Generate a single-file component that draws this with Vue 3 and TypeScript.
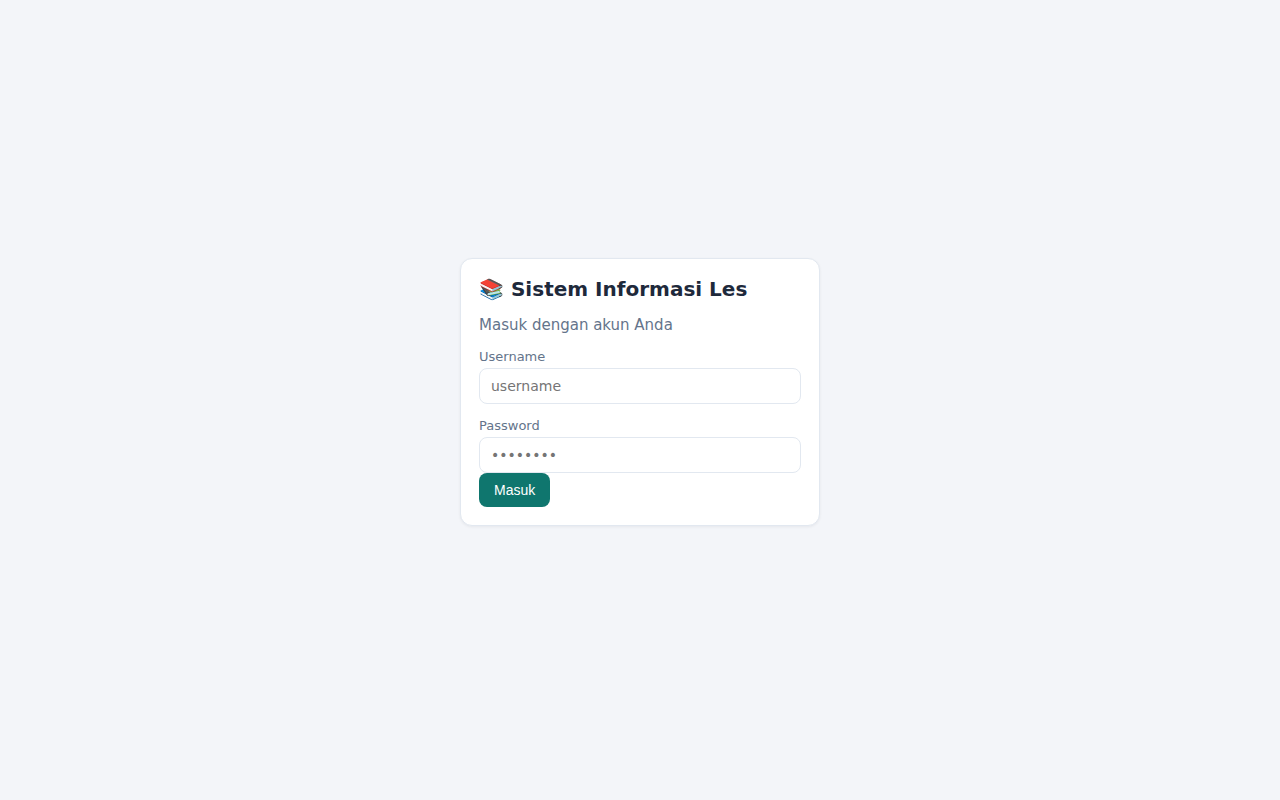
<script setup lang="ts">
import { ref } from 'vue'

const username = ref<string>('')
const password = ref<string>('')
</script>

<template>
  <main class="page">
    <form class="card" @submit.prevent>
      <h1>📚 Sistem Informasi Les</h1>
      <p class="intro">Masuk dengan akun Anda</p>
      <div class="field">
        <label for="username">Username</label>
        <input id="username" v-model="username" type="text" placeholder="username" autocomplete="username" />
      </div>
      <div class="field">
        <label for="password">Password</label>
        <input id="password" v-model="password" type="password" placeholder="••••••••" autocomplete="current-password" />
      </div>
      <button type="submit">Masuk</button>
    </form>
  </main>
</template>

<style>
body {
  margin: 0;
  background: #f3f5f9;
}
</style>

<style scoped>
.page {
  box-sizing: border-box;
  min-height: 100vh;
  padding: 0 16px 16px;
  display: flex;
  align-items: center;
  justify-content: center;
  color: #1e293b;
  font-family: "DejaVu Sans", sans-serif;
  font-size: 15px;
  line-height: 24px;
}

.card {
  box-sizing: border-box;
  width: 100%;
  max-width: 360px;
  padding: 18px;
  background: #fff;
  border: 1px solid #e2e8f0;
  border-radius: 12px;
  box-shadow: 0 1px 3px rgba(15, 23, 42, 0.06);
}

h1 {
  margin: 0 0 12px;
  font-size: 20px;
  line-height: 24px;
}

.intro {
  margin: 0 0 12px;
  color: #64748b;
}

.field + .field {
  margin-top: 14px;
}

label {
  display: block;
  margin-bottom: 4px;
  color: #64748b;
  font-size: 13px;
  line-height: 15px;
}

input {
  box-sizing: border-box;
  display: block;
  width: 100%;
  height: 36px;
  padding: 0 11px;
  border: 1px solid #e2e8f0;
  border-radius: 8px;
  background: #fff;
  color: inherit;
  font-family: inherit;
  font-size: 14px;
}

button {
  display: block;
  padding: 9px 15px;
  border: 0;
  border-radius: 8px;
  background: #0f766e;
  color: #fff;
  font-family: "Liberation Sans", Arial, sans-serif;
  font-size: 14px;
  line-height: 16px;
  cursor: pointer;
}
</style>
